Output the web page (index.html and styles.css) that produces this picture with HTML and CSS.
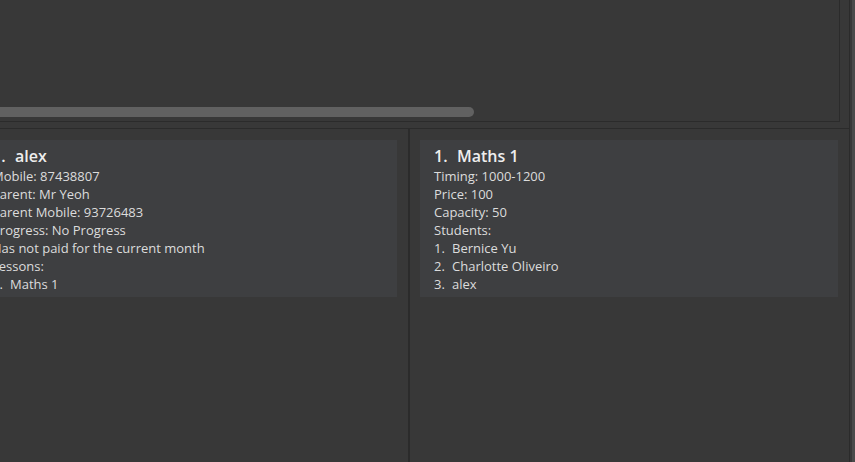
FILE: index.html
```html
<!DOCTYPE html>
<html>
<head>
<meta charset="utf-8">
<link rel="stylesheet" href="styles.css">
</head>
<body>
<div class="window">
  <div class="main">
    <div class="top">
      <div class="top-panel">
        <div class="hscroll"><div class="thumb"></div></div>
      </div>
    </div>
    <div class="lists">
      <div class="col col-left">
        <div class="card">
          <div class="title"><span class="num">1.</span>alex</div>
          <div class="line">Mobile: 87438807</div>
          <div class="line">Parent: Mr Yeoh</div>
          <div class="line">Parent Mobile: 93726483</div>
          <div class="line">Progress: No Progress</div>
          <div class="line">Has not paid for the current month</div>
          <div class="line">Lessons:</div>
          <div class="line"><span class="inum">1.</span>Maths 1</div>
        </div>
      </div>
      <div class="divider"></div>
      <div class="col col-right">
        <div class="card">
          <div class="title"><span class="num">1.</span>Maths 1</div>
          <div class="line">Timing: 1000-1200</div>
          <div class="line">Price: 100</div>
          <div class="line">Capacity: 50</div>
          <div class="line">Students:</div>
          <div class="line"><span class="inum">1.</span>Bernice Yu</div>
          <div class="line"><span class="inum">2.</span>Charlotte Oliveiro</div>
          <div class="line"><span class="inum">3.</span>alex</div>
        </div>
      </div>
    </div>
  </div>
  <div class="edge"></div>
</div>
</body>
</html>
```

FILE: styles.css
```css
html, body {
  margin: 0;
  padding: 0;
  background: #383838;
  width: 855px;
  height: 462px;
  overflow: hidden;
  font-family: "Open Sans", "Noto Sans", sans-serif;
}

.window {
  display: flex;
  height: 462px;
}

.main {
  width: 849px;
  display: flex;
  flex-direction: column;
  border-right: 1px solid #2b2b2b;
}

.edge {
  width: 3px;
  margin-left: 2px;
  background: #4a4a4a;
}

.top {
  height: 129px;
  box-sizing: border-box;
  border-bottom: 1px solid #2b2b2b;
}

.top-panel {
  width: 840px;
  height: 122px;
  box-sizing: border-box;
  border-right: 1px solid #2b2b2b;
  border-bottom: 1px solid #2b2b2b;
  display: flex;
  flex-direction: column;
  justify-content: flex-end;
  padding-bottom: 4px;
}

.hscroll {
  height: 10px;
}

.thumb {
  width: 474px;
  height: 10px;
  background: #616161;
  border-radius: 0 5px 5px 0;
}

.lists {
  flex: 1;
  display: flex;
  margin-left: -32px;
}

.col {
  padding: 11px 10px 0 10px;
}

.col-left {
  width: 419px;
  padding-right: 11px;
}

.col-right {
  width: 418px;
}

.divider {
  width: 2px;
  background: #2b2b2b;
}

.card {
  background: #3e3f41;
  padding: 5px 14px 4px 14px;
  color: #dcdcdc;
}

.title {
  font-size: 16px;
  font-weight: 600;
  line-height: 22px;
  color: #eeeeee;
}

.num {
  display: inline-block;
  width: 23px;
}

.line {
  font-size: 13px;
  line-height: 18px;
}

.inum {
  display: inline-block;
  width: 18px;
}
```
